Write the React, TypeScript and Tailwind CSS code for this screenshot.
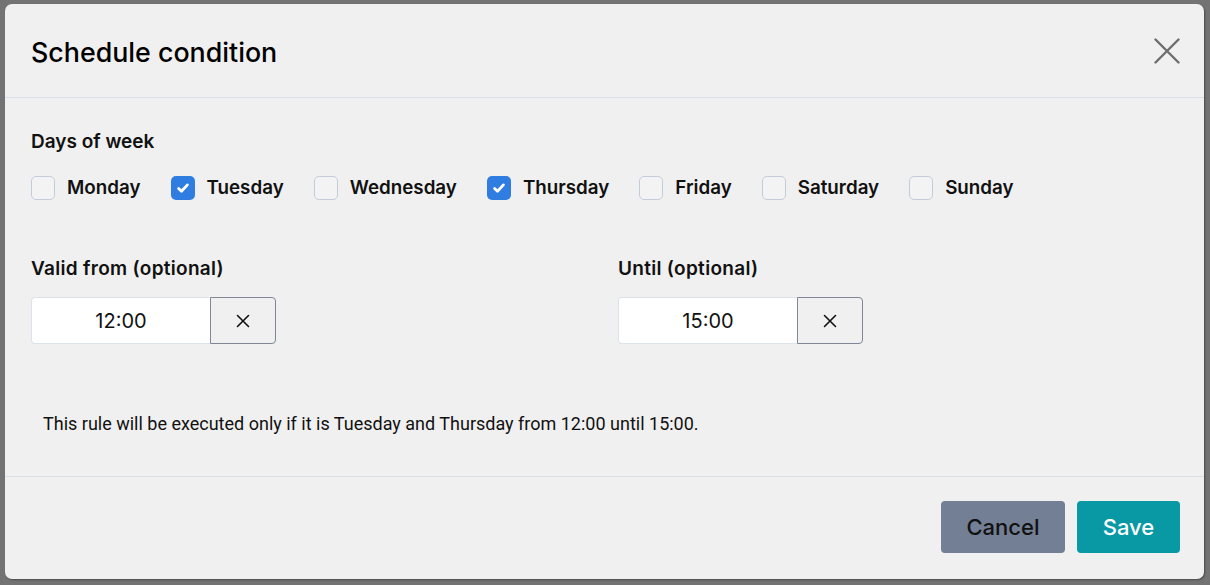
import React from 'react';

const days = [
  { name: 'Monday', checked: false },
  { name: 'Tuesday', checked: true },
  { name: 'Wednesday', checked: false },
  { name: 'Thursday', checked: true },
  { name: 'Friday', checked: false },
  { name: 'Saturday', checked: false },
  { name: 'Sunday', checked: false },
];

function Checkbox({ checked }: { checked: boolean }) {
  if (checked) {
    return (
      <span className="flex h-6 w-6 shrink-0 items-center justify-center rounded-[5px] bg-[#2f7de1]">
        <svg width="16" height="16" viewBox="0 0 16 16" fill="none">
          <path d="M3.6 8.4l2.9 2.9 5.9-6.4" stroke="white" strokeWidth="2.8" strokeLinecap="round" strokeLinejoin="round" />
        </svg>
      </span>
    );
  }
  return <span className="h-6 w-6 shrink-0 rounded-[5px] border border-[#c3ccd9] bg-[#f3f3f3]" />;
}

function TimeField({ label, value }: { label: string; value: string }) {
  return (
    <div className="flex flex-col">
      <label className="text-[19px] font-semibold leading-6 tracking-[0.3px] text-[#111]">{label}</label>
      <div className="mt-[16px] flex h-[47px]">
        <div className="flex w-[179px] items-center justify-center rounded-l-[4px] border border-r-0 border-[#dde3ea] bg-white text-[20px] text-[#111]">
          {value}
        </div>
        <button className="flex w-[66px] items-center justify-center rounded-r-[4px] border border-[#7f8796] bg-[#f0f0f0]">
          <svg width="14" height="14" viewBox="0 0 14 14" fill="none">
            <path d="M1.5 1.5l11 11M12.5 1.5l-11 11" stroke="#111" strokeWidth="1.6" strokeLinecap="round" />
          </svg>
        </button>
      </div>
    </div>
  );
}

export default function App() {
  return (
    <div
      className="h-[585px] w-[1210px] overflow-hidden bg-[#737373] pl-[5px] pt-[4px]"
      style={{ fontFamily: 'Inter, Roboto, "Noto Sans", sans-serif' }}
    >
      <div className="flex h-[575px] w-[1199px] flex-col rounded-[7px] bg-[#f0f0f0] shadow-[1px_1px_2px_rgba(0,0,0,0.35)]">
        {/* header */}
        <div className="flex h-[94px] shrink-0 items-center justify-between border-b border-[#d7e0ea] pl-[26px] pr-[24px]">
          <h1 className="mt-[3px] text-[26.8px] font-medium text-black">Schedule condition</h1>
          <button className="mt-[1px]">
            <svg width="26" height="26" viewBox="0 0 26 26" fill="none">
              <path d="M1.5 1.5l23 23M24.5 1.5l-23 23" stroke="#6e6e6e" strokeWidth="2.4" strokeLinecap="round" />
            </svg>
          </button>
        </div>

        {/* body */}
        <div className="flex flex-1 flex-col border-b border-[#d7e0ea] pl-[26px] pr-[24px] pt-[32px]">
          <div className="text-[19px] font-semibold leading-6 text-[#111]">Days of week</div>
          <div className="mt-[22px] flex items-center gap-x-[30px]">
            {days.map((d) => (
              <div key={d.name} className="flex items-center gap-x-[12px]">
                <Checkbox checked={d.checked} />
                <span className="text-[18.8px] font-semibold leading-6 text-[#111]">{d.name}</span>
              </div>
            ))}
          </div>

          <div className="mt-[57px] grid grid-cols-[587px_1fr]">
            <TimeField label="Valid from (optional)" value="12:00" />
            <TimeField label="Until (optional)" value="15:00" />
          </div>

          <p
            className="ml-[12px] mt-[68px] text-[18px] leading-6 text-[#111]"
            style={{ fontFamily: 'Roboto, "Noto Sans", sans-serif' }}
          >
            This rule will be executed only if it is Tuesday and Thursday from 12:00 until 15:00.
          </p>
        </div>

        {/* footer */}
        <div className="flex h-[102px] shrink-0 items-start justify-end gap-x-[12px] pr-[24px] pt-[24px]">
          <button className="h-[52px] w-[124px] rounded-[4px] bg-[#737f94] text-[22px] font-medium text-[#111]">
            Cancel
          </button>
          <button className="h-[52px] w-[103px] rounded-[4px] bg-[#0899a5] text-[22px] font-medium text-white">
            Save
          </button>
        </div>
      </div>
    </div>
  );
}
